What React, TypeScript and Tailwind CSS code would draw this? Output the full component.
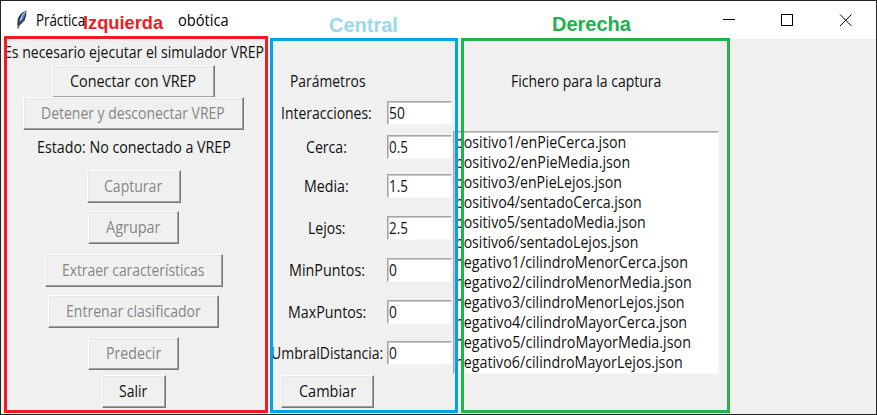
import { useLayoutEffect, useRef, useState } from "react";
import clsx from "clsx";

/* A single line of text squeezed horizontally to a given width. */
function Fit({ w, children, className }: { w: number; children: string; className?: string }) {
  const ref = useRef<HTMLSpanElement>(null);
  const [scale, setScale] = useState(1);
  useLayoutEffect(() => {
    if (ref.current) setScale(w / ref.current.offsetWidth);
  }, [w]);
  return (
    <span className={clsx("flex shrink-0", className)} style={{ width: w }}>
      <span ref={ref} className="shrink-0 origin-left whitespace-pre" style={{ transform: `scaleX(${scale})` }}>
        {children}
      </span>
    </span>
  );
}

function Button({ text, tw, disabled, className }: { text: string; tw: number; disabled?: boolean; className: string }) {
  return (
    <button
      disabled={disabled}
      className={clsx(
        "flex h-[33px] shrink-0 items-center justify-center border border-t-white border-l-white border-r-[#777777] border-b-[#777777] bg-[#f0f0f0] pr-px pb-px shadow-[inset_-1px_-1px_0_#a0a0a0,inset_1px_1px_0_#e6e6e6]",
        disabled ? "text-[#868686]" : "text-[#111111]",
        className,
      )}
    >
      <Fit w={tw}>{text}</Fit>
    </button>
  );
}

function Field({ label, lw, value, vw, className }: { label: string; lw: number; value: string; vw: number; className: string }) {
  return (
    <div className={clsx("flex h-[25px] shrink-0 items-center", className)}>
      <div className="mr-px flex w-[117px] shrink-0 justify-center pr-0.5">
        <Fit w={lw}>{label}</Fit>
      </div>
      <div className="flex h-[24px] w-[65px] items-center border border-t-[#a5a5a5] border-l-[#a5a5a5] border-r-[#f7f7f7] border-b-[#f7f7f7] bg-white pl-px shadow-[inset_1px_1px_0_#c9c9c9]">
        <Fit w={vw}>{value}</Fit>
      </div>
    </div>
  );
}

const files: [string, number][] = [
  ["positivo1/enPieCerca.json", 171],
  ["positivo2/enPieMedia.json", 175],
  ["positivo3/enPieLejos.json", 167],
  ["positivo4/sentadoCerca.json", 187],
  ["positivo5/sentadoMedia.json", 191],
  ["positivo6/sentadoLejos.json", 183],
  ["negativo1/cilindroMenorCerca.json", 233],
  ["negativo2/cilindroMenorMedia.json", 237],
  ["negativo3/cilindroMenorLejos.json", 230],
  ["negativo4/cilindroMayorCerca.json", 232],
  ["negativo5/cilindroMayorMedia.json", 236],
  ["negativo6/cilindroMayorLejos.json", 228],
];

function Feather() {
  return (
    <svg width="12" height="20" viewBox="0 0 12 20" className="shrink-0">
      <path d="M10.5 .6C7 1.5 3 5 1.7 9.5L1.3 14.5 2 17 4.5 14.5 8.5 10.5 10 6Z" fill="#26313d" />
      <path d="M9.5 2C6.5 3.5 4 7 3 11.5L3.8 13 7.2 9.5 8.8 5.5Z" fill="#5488ca" />
      <path d="M9.8 1.4C7 3.5 5 7.5 4.4 11" stroke="#b9d2ea" strokeWidth="1.1" fill="none" />
      <path d="M4.4 10.5 1.8 18.5" stroke="#4e4d4c" strokeWidth="1.2" />
    </svg>
  );
}

function TitleBar() {
  return (
    <header className="flex h-[38px] shrink-0 items-center bg-white pl-[15px] text-black">
      <Feather />
      <div className="ml-2 flex">
        <Fit w={49}>Práctica</Fit>
      </div>
      <div className="ml-[93px] flex">
        <Fit w={51}>obótica</Fit>
      </div>
      <svg width="153" height="14" viewBox="0 0 153 14" className="mr-6 ml-auto shrink-0" fill="none" stroke="#000" shapeRendering="crispEdges">
        <path d="M24 6.5h12M82.5 1.5h11v11h-11z" />
        <path d="M141 1.5l11.5 11.5M152.5 1.5l-11.5 11.5" shapeRendering="auto" />
      </svg>
    </header>
  );
}

export default function App() {
  return (
    <div className="relative flex h-[415px] w-[877px] flex-col overflow-hidden border border-[#22222a] bg-[#f0f0f0] font-['Open_Sans','Noto_Sans',sans-serif] text-[15.5px] leading-5 text-[#111111]">
      <TitleBar />
      <main className="flex flex-1">
        <section className="flex w-[265px] shrink-0 flex-col items-center">
          <Fit w={260} className="mt-[3px]">Es necesario ejecutar el simulador VREP</Fit>
          <Button text="Conectar con VREP" tw={126} className="mt-[3px] w-[163px]" />
          <Button text="Detener y desconectar VREP" tw={184} disabled className="-mt-px w-[221px]" />
          <Fit w={194} className="mt-[7px]">Estado: No conectado a VREP</Fit>
          <Button text="Capturar" tw={58} disabled className="mt-[13px] w-[94px]" />
          <Button text="Agrupar" tw={55} disabled className="mt-2 w-[91px]" />
          <Button text="Extraer características" tw={142} disabled className="mt-[10px] w-[178px]" />
          <Button text="Entrenar clasificador" tw={135} disabled className="mt-2 w-[171px]" />
          <Button text="Predecir" tw={55} disabled className="mt-[9px] w-[91px]" />
          <Button text="Salir" tw={28} className="mt-[5px] w-[64px]" />
        </section>

        <section className="ml-px flex w-[186px] shrink-0 flex-col pl-[2px]">
          <div className="mt-8 flex h-5 w-[117px] justify-center">
            <Fit w={76}>Parámetros</Fit>
          </div>
          <Field label="Interacciones:" lw={91} value="50" vw={16} className="mt-[9px]" />
          <Field label="Cerca:" lw={41} value="0.5" vw={19} className="mt-[9px]" />
          <Field label="Media:" lw={45} value="1.5" vw={19} className="mt-[14px]" />
          <Field label="Lejos:" lw={38} value="2.5" vw={19} className="mt-[17px]" />
          <Field label="MinPuntos:" lw={76} value="0" vw={8} className="mt-[17px]" />
          <Field label="MaxPuntos:" lw={78} value="0" vw={8} className="mt-[17px]" />
          <Field label="UmbralDistancia:" lw={112} value="0" vw={8} className="mt-4" />
          <Button text="Cambiar" tw={57} className="mt-[10px] ml-3 w-[93px]" />
        </section>

        <section className="flex w-[266px] shrink-0 flex-col">
          <div className="mt-8 flex h-5 justify-center">
            <Fit w={150}>Fichero para la captura</Fit>
          </div>
          <div className="mt-10 h-[243px] border border-t-[#a5a5a5] border-l-[#a5a5a5] border-r-[#f7f7f7] border-b-[#f7f7f7] bg-white pl-px shadow-[inset_1px_1px_0_#c9c9c9]">
            {files.map(([name, w]) => (
              <Fit key={name} w={w}>{name}</Fit>
            ))}
          </div>
        </section>
      </main>

      {/* Region annotations laid over the window */}
      <div className="pointer-events-none absolute top-[35px] left-[3px] h-[377px] w-[264px] border-3 border-[#ee1c24]" />
      <div className="pointer-events-none absolute top-[37px] left-[269px] h-[375px] w-[188px] border-3 border-[#00a2e8]" />
      <div className="pointer-events-none absolute top-[37px] left-[460px] h-[375px] w-[269px] border-3 border-[#22b14c]" />
      <div className="absolute top-[12px] left-[82px] font-['Liberation_Sans',sans-serif] text-[18px] font-bold text-[#ee1c24]">
        <Fit w={80}>Izquierda</Fit>
      </div>
      <div className="absolute top-[14px] left-[328px] font-['Liberation_Sans',sans-serif] text-[20px] font-bold text-[#99d9ea]">
        <Fit w={69}>Central</Fit>
      </div>
      <div className="absolute top-[13px] left-[551px] font-['Liberation_Sans',sans-serif] text-[20px] font-bold text-[#22b14c]">
        <Fit w={79}>Derecha</Fit>
      </div>
    </div>
  );
}
